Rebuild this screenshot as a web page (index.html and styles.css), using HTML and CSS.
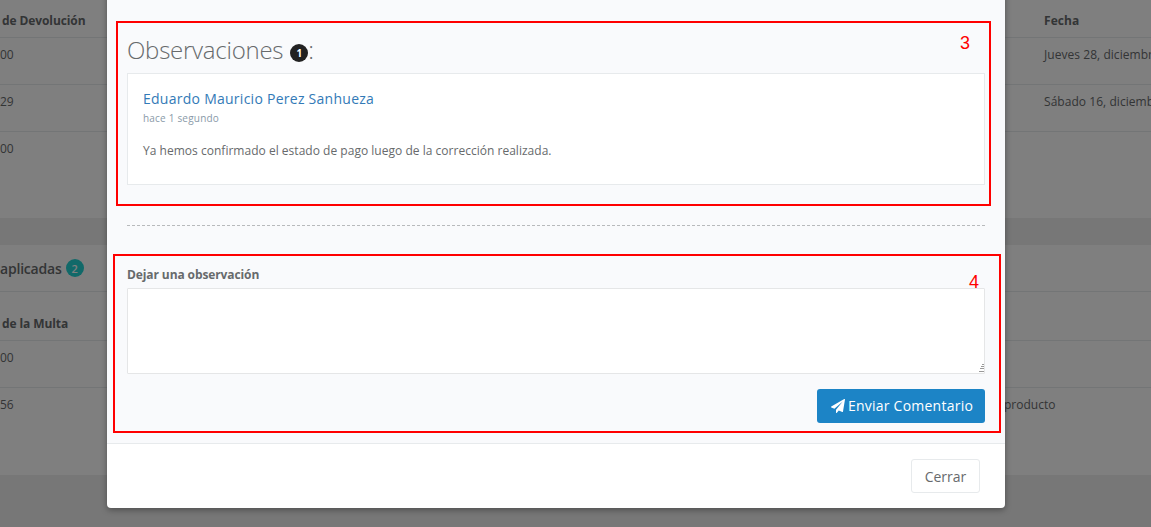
FILE: index.html
```html
<!DOCTYPE html>
<html lang="es">
<head>
<meta charset="utf-8">
<title>Observaciones</title>
<link rel="stylesheet" href="styles.css">
</head>
<body>
<main class="page">
  <section class="panel panel-top">
    <div class="row row-head"><span class="cell-a">de Devolución</span><span class="cell-b">Fecha</span></div>
    <div class="row"><span class="cell-a cell-num">00</span><span class="cell-b">Jueves 28, diciembre</span></div>
    <div class="row"><span class="cell-a cell-num">29</span><span class="cell-b">Sábado 16, diciembre</span></div>
    <div class="row row-plain"><span class="cell-a cell-num">00</span></div>
  </section>
  <section class="panel panel-bottom">
    <div class="panel-title"><span class="title-text">aplicadas</span><span class="badge-teal">2</span></div>
    <div class="row row-head row-head-2"><span class="cell-a">de la Multa</span></div>
    <div class="row"><span class="cell-a cell-num">00</span></div>
    <div class="row row-plain"><span class="cell-a cell-num">56</span><span class="cell-c">producto</span></div>
  </section>
</main>
<div class="backdrop"></div>
<div class="modal">
  <div class="modal-body">
    <h2 class="obs-title">Observaciones <span class="badge-dark">1</span>:</h2>
    <article class="comment">
      <a class="comment-name">Eduardo Mauricio Perez Sanhueza</a>
      <small class="comment-time">hace 1 segundo</small>
      <p class="comment-text">Ya hemos confirmado el estado de pago luego de la corrección realizada.</p>
    </article>
    <hr class="dash">
    <label class="field-label" for="obs">Dejar una observación</label>
    <textarea class="field" id="obs"></textarea>
    <div class="actions">
      <button class="btn-send" type="button">
        <svg class="send-icon" viewBox="0 0 1792 1792" aria-hidden="true"><path d="M1764 11q33 24 27 64l-256 1536q-5 29-32 45-14 8-31 8-11 0-24-5l-453-185-242 295q-18 23-49 23-13 0-22-4-19-7-30.5-23.5t-11.5-36.5v-349l864-1059-1069 925-395-162q-37-14-40-55-2-40 32-59l1664-960q15-9 32-9 20 0 36 11z"/></svg>
        Enviar Comentario
      </button>
    </div>
  </div>
  <div class="modal-footer"><button class="btn-close" type="button">Cerrar</button></div>
  <div class="mark mark-3"><span class="mark-num">3</span></div>
  <div class="mark mark-4"><span class="mark-num">4</span></div>
</div>
</body>
</html>
```
FILE: styles.css
```css
* { box-sizing: border-box; }
html, body { margin: 0; height: 527px; overflow: hidden; }
body {
  position: relative;
  width: 1151px;
  background: #eeeeee;
  font-family: "Open Sans", sans-serif;
  font-size: 12px;
  color: #676a6c;
}
.page { display: flex; flex-direction: column; gap: 27px; }
.panel { background: #fff; }
.panel-top { height: 218px; }
.panel-bottom { height: 230px; }
.row {
  display: flex;
  height: 47px;
  padding-top: 8px;
  border-bottom: 1px solid #e7eaec;
  line-height: 17px;
}
.row-plain { border-bottom: 0; }
.row-head { height: 38px; padding-top: 12px; font-weight: 700; letter-spacing: -.1px; }
.row-head-2 { height: 49px; padding-top: 23px; }
.cell-a { width: 1044px; padding-left: 2px; flex: none; }
.cell-num { padding-left: 0; }
.cell-b { white-space: nowrap; letter-spacing: .05px; }
.cell-c { margin-left: -40px; white-space: nowrap; }
.panel-title {
  display: flex;
  align-items: center;
  gap: 4px;
  height: 47px;
  border-bottom: 1px solid #e7eaec;
  font-size: 14px;
  font-weight: 600;
}
.title-text { letter-spacing: -.2px; }
.badge-teal {
  display: flex;
  align-items: center;
  justify-content: center;
  width: 18px;
  height: 18px;
  border-radius: 50%;
  background: #22d2d2;
  color: #fff;
  font-size: 11px;
}
.backdrop {
  position: absolute;
  inset: 0;
  background: rgba(0, 0, 0, .5);
}
.modal {
  position: absolute;
  left: 107px;
  top: -60px;
  width: 898px;
  height: 568px;
  display: flex;
  flex-direction: column;
  background: #fff;
  border-radius: 4px;
  box-shadow: 0 2px 6px rgba(0, 0, 0, .35);
}
.modal-body {
  flex: 1;
  padding: 94px 20px 0;
  background: #f9fafc;
  border-bottom: 1px solid #e7eaec;
}
.obs-title {
  margin: 0;
  height: 39px;
  font-size: 24px;
  font-weight: 300;
  line-height: 31px;
  letter-spacing: -.25px;
}
.badge-dark {
  display: inline-flex;
  align-items: center;
  justify-content: center;
  width: 18px;
  height: 18px;
  margin-left: 1px;
  border-radius: 50%;
  background: #222;
  color: #fff;
  font-size: 10px;
  font-weight: 700;
  line-height: 1;
  vertical-align: 2px;
}
.comment {
  height: 112px;
  padding: 15px;
  background: #fff;
  border: 1px solid #e7eaec;
}
.comment-name { display: block; font-size: 14px; line-height: 20px; color: #337ab7; letter-spacing: .26px; }
.comment-time { display: block; margin-top: 1px; font-size: 10px; line-height: 16px; color: #8a9aa8; letter-spacing: .2px; }
.comment-text { margin: 16px 0 0; line-height: 17px; letter-spacing: .02px; }
.dash { height: 0; margin: 40px 0 0; border: 0; border-top: 1px dashed #b8babc; }
.field-label { display: block; margin-top: 40px; font-weight: 700; line-height: 17px; letter-spacing: -.1px; }
.field {
  display: block;
  width: 100%;
  height: 86px;
  margin-top: 5px;
  background: #fff;
  border: 1px solid #e5e6e7;
  border-radius: 1px;
  outline: 0;
}
.field::-webkit-resizer {
  background-color: #fff;
  background-image:
    linear-gradient(#999, #999),
    linear-gradient(#999, #999),
    linear-gradient(#999, #999),
    linear-gradient(#999, #999);
  background-repeat: no-repeat;
  background-size: 2px 1px, 3px 1px, 4px 1px, 5px 1px;
  background-position: right 0 top 6px, right 0 top 8px, right 0 top 10px, right 0 top 13px;
}
.actions { display: flex; justify-content: flex-end; margin-top: 15px; }
.btn-send {
  display: flex;
  align-items: center;
  justify-content: center;
  gap: 3px;
  width: 168px;
  height: 34px;
  padding: 0 0 2px 2px;
  background: #1c84c6;
  border: 0;
  border-radius: 3px;
  color: #fff;
  font: 14px "Open Sans", sans-serif;
  letter-spacing: .24px;
}
.send-icon { width: 14px; height: 14px; fill: #fff; margin-top: 2px; }
.modal-footer { display: flex; justify-content: flex-end; height: 64px; padding: 15px 25px 0 0; }
.btn-close {
  width: 69px;
  height: 34px;
  background: #fff;
  border: 1px solid #e7eaec;
  border-radius: 3px;
  color: #676a6c;
  font: 14px "Open Sans", sans-serif;
}
.mark {
  position: absolute;
  display: flex;
  justify-content: flex-end;
  border: 2px solid #f00;
  color: #f00;
  font: 18px "Liberation Sans", sans-serif;
}
.mark-3 { left: 9px; top: 81px; width: 875px; height: 185px; padding: 10px 19px 0 0; }
.mark-4 { left: 6px; top: 314px; width: 888px; height: 179px; padding: 16px 20px 0 0; }
```
